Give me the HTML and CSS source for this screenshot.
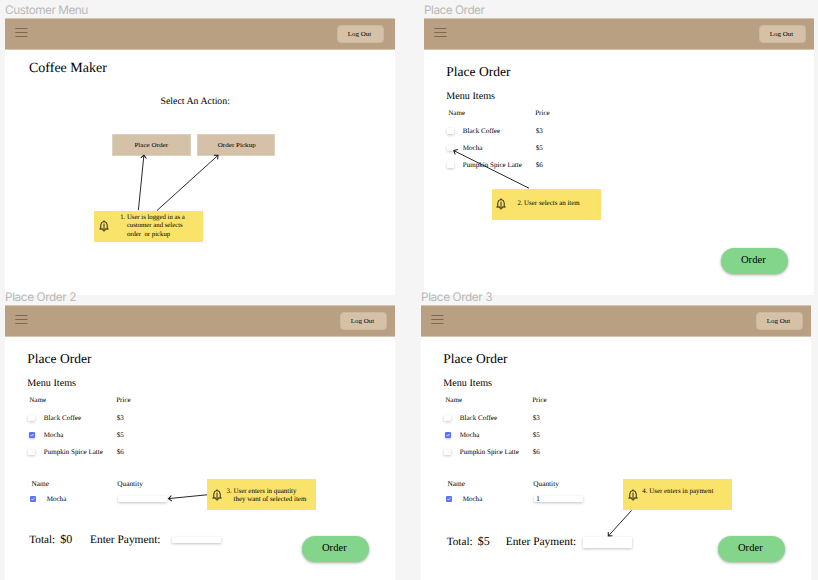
FILE: index.html
```html
<!DOCTYPE html>
<html lang="en">
<head>
<meta charset="utf-8">
<title>Coffee Maker storyboard</title>
<link rel="stylesheet" href="styles.css">
</head>
<body>
<svg class="defs" width="0" height="0">
  <symbol id="bell" viewBox="0 0 10 12"><path d="M.7 9h8.6M1.8 8.8V5a3.2 3.4 0 0 1 6.4 0v3.8M5 1.6V.8M5 4v2.2M5 6.9v.7M3.7 9.4a1.3 1.7 0 0 0 2.6 0" fill="none" stroke="#2f2a12" stroke-width="1" stroke-linecap="round"/></symbol>
  <symbol id="menu" viewBox="0 0 13 10"><path d="M.3 .5h12.2M.3 4.5h12.2M.3 8.5h12.2" fill="none" stroke="#7c6851" stroke-width="1"/></symbol>
  <symbol id="check" viewBox="0 0 6 6"><path d="M1.5 3l1.1 1.1L4.5 1.9" fill="none" stroke="#fff" stroke-width=".8"/></symbol>
</svg>
<main class="canvas">

  <section class="frame frame-a">
    <h2 class="label">Customer Menu</h2>
    <header class="bar"><svg class="burger"><use href="#menu"/></svg><button class="logout">Log Out</button></header>
    <div class="home">
      <h1 class="title brand">Coffee Maker</h1>
      <p class="prompt">Select An Action:</p>
      <div class="actions"><button class="action">Place Order</button><button class="action second">Order Pickup</button></div>
    </div>
  </section>

  <section class="frame frame-b">
    <h2 class="label">Place Order</h2>
    <header class="bar"><svg class="burger"><use href="#menu"/></svg><button class="logout">Log Out</button></header>
    <div class="body">
      <h1 class="title">Place Order</h1>
      <h3 class="subtitle">Menu Items</h3>
      <div class="head"><span>Name</span><span>Price</span></div>
      <div class="item"><i class="box"></i><span>Black Coffee</span><span>$3</span></div>
      <div class="item"><i class="box"></i><span>Mocha</span><span>$5</span></div>
      <div class="item"><i class="box"></i><span>Pumpkin Spice Latte</span><span>$6</span></div>
      <button class="order solo">Order</button>
    </div>
  </section>

  <section class="frame frame-c">
    <h2 class="label">Place Order 2</h2>
    <header class="bar"><svg class="burger"><use href="#menu"/></svg><button class="logout">Log Out</button></header>
    <div class="body">
      <h1 class="title">Place Order</h1>
      <h3 class="subtitle">Menu Items</h3>
      <div class="head"><span>Name</span><span>Price</span></div>
      <div class="item"><i class="box"></i><span>Black Coffee</span><span>$3</span></div>
      <div class="item"><svg class="box on"><use href="#check"/></svg><span>Mocha</span><span>$5</span></div>
      <div class="item"><i class="box"></i><span>Pumpkin Spice Latte</span><span>$6</span></div>
      <div class="head chosen"><span>Name</span><span>Quantity</span></div>
      <div class="item pick"><svg class="box on"><use href="#check"/></svg><span>Mocha</span><span class="field"></span></div>
      <div class="pay"><span class="total">Total:</span><span class="sum">$0</span><span class="enter">Enter Payment:</span><span class="field"></span><button class="order">Order</button></div>
    </div>
  </section>

  <section class="frame frame-d">
    <h2 class="label">Place Order 3</h2>
    <header class="bar"><svg class="burger"><use href="#menu"/></svg><button class="logout">Log Out</button></header>
    <div class="body">
      <h1 class="title">Place Order</h1>
      <h3 class="subtitle">Menu Items</h3>
      <div class="head"><span>Name</span><span>Price</span></div>
      <div class="item"><i class="box"></i><span>Black Coffee</span><span>$3</span></div>
      <div class="item"><svg class="box on"><use href="#check"/></svg><span>Mocha</span><span>$5</span></div>
      <div class="item"><i class="box"></i><span>Pumpkin Spice Latte</span><span>$6</span></div>
      <div class="head chosen"><span>Name</span><span>Quantity</span></div>
      <div class="item pick"><svg class="box on"><use href="#check"/></svg><span>Mocha</span><span class="field">1</span></div>
      <div class="pay low"><span class="total">Total:</span><span class="sum">$5</span><span class="enter">Enter Payment:</span><span class="field tall"></span><button class="order">Order</button></div>
    </div>
  </section>

  <aside class="note note-1"><svg class="bell"><use href="#bell"/></svg><span class="num">1.</span><p>User is logged in as a<br>customer and selects<br>order&nbsp; or pickup</p></aside>
  <aside class="note note-2"><svg class="bell"><use href="#bell"/></svg><span class="num">2.</span><p>User selects an item</p></aside>
  <aside class="note note-3"><svg class="bell"><use href="#bell"/></svg><span class="num">3.</span><p>User enters in quantity<br>they want of selected item</p></aside>
  <aside class="note note-4"><svg class="bell"><use href="#bell"/></svg><span class="num">4.</span><p>User enters in payment</p></aside>

  <svg class="arrows" viewBox="0 0 818 580">
    <defs><marker id="tip" markerUnits="userSpaceOnUse" markerWidth="8" markerHeight="8" refX="5" refY="4" orient="auto"><path d="M2 1.2L5 4L2 6.8" fill="none" stroke="#111" stroke-width="1"/></marker></defs>
    <path d="M138.4 210.2L143.9 155.2"/>
    <path d="M157 210.5L218 155.3"/>
    <path d="M529 188.2L453.8 150.6"/>
    <path d="M207 494.8L168.6 498.6"/>
    <path d="M631.5 510.5L608.3 536"/>
  </svg>
</main>
</body>
</html>
```
FILE: styles.css
```css
* { box-sizing: border-box; margin: 0; padding: 0; }
body { background: #f5f5f5; overflow: hidden; }
button { border: 0; font: inherit; color: inherit; }
.defs { position: absolute; }

.canvas {
  position: relative;
  width: 818px;
  height: 580px;
  overflow: hidden;
  font: 7.05px/10px "Liberation Serif", serif;
  color: #000;
  text-rendering: geometricPrecision;
}

/* Frames on the canvas */
.frame { position: absolute; width: 390px; height: 277px; background: #fff; }
.frame-a { left: 5px; top: 18px; }
.frame-b { left: 424px; top: 18px; }
.frame-c { left: 5px; top: 305px; }
.frame-d { left: 421px; top: 305px; }
.label {
  position: absolute;
  left: 0;
  top: -16px;
  font: 400 11.8px/16px Inter, sans-serif;
  letter-spacing: -.48px;
  color: #b9b9b9;
  white-space: nowrap;
}
.frame-c .label, .frame-d .label { letter-spacing: -.4px; }

/* Top bar */
.bar {
  display: flex;
  justify-content: space-between;
  align-items: flex-start;
  height: 32px;
  padding: 7px 8px 0 10px;
  background: #b9a083;
  border: 1px solid #d6c5ad;
  border-width: 1px 0;
}
.burger { width: 13px; height: 10px; margin-top: 2px; }
.logout {
  width: 47px;
  height: 18px;
  margin-top: -1px;
  border: 1px solid #cdb89b;
  border-radius: 4px;
  background: #d5c0a8;
  font-size: 7px;
  line-height: 16px;
  padding-right: 2px;
}
.frame-a .bar { padding-right: 11px; }

/* Customer menu */
.home { padding-top: 10px; }
.title { font-size: 13.5px; line-height: 18px; font-weight: 400; }
.brand { font-size: 14px; padding-left: 24px; }
.prompt { margin-top: 16px; padding-left: 155.5px; font-size: 9.85px; line-height: 16px; }
.actions { display: flex; gap: 6px; padding-left: 107px; margin-top: 24px; }
.action {
  width: 78.5px;
  height: 22px;
  background: #d5c0a8;
  border: 1px solid #dfd0be;
  font-size: 7.1px;
}
.action.second { padding-left: 2px; }

/* Order screens */
.body { display: flex; flex-direction: column; padding: 13px 0 0 22.3px; }
.subtitle { margin-top: 9px; font-size: 10.15px; line-height: 14px; font-weight: 400; }
.head { display: grid; grid-template-columns: 87px 1fr; padding-left: 1.9px; margin: 3.8px 0 4.2px; }
.item { display: grid; grid-template-columns: 15.5px 73px 1fr; padding-left: 1px; height: 17.33px; align-items: center; }
.box {
  width: 7px;
  height: 6px;
  border-radius: 1px;
  background: #fff;
  box-shadow: 0 1px 3px rgba(0, 0, 0, .24);
}
.box.on { width: 6px; background: #5b73f5; box-shadow: 0 1px 2px rgba(60, 80, 220, .35); margin-left: .5px; }
.chosen { grid-template-columns: 85.7px 1fr; margin: 18.2px 0 0; padding-left: 4.3px; font-size: 7.3px; }
.pick { grid-template-columns: 16.4px 71px 49px; padding-left: 3px; height: 16px; margin-top: 2px; }
.pick .box { box-shadow: none; margin: -1px 0 0; }
.field {
  width: 49px;
  height: 6px;
  padding-left: 2.5px;
  border-radius: 1px;
  background: #fff;
  box-shadow: 0 1px 3px rgba(0, 0, 0, .24);
  line-height: 6px;
}
.field.tall { height: 11px; margin-top: 6px; }

.pay { display: flex; align-items: flex-start; margin-top: 25px; padding: 0 25.7px 0 2px; font-size: 11.4px; line-height: 16px; }
.pay .field { margin-top: 5px; }
.pay .total { width: 31px; font-size: 11.2px; }
.pay .sum { width: 29.7px; font-size: 12px; line-height: 15px; }
.pay .enter { width: 82.5px; }
.pay.low { padding-left: 3.4px; }
.pay.low > span { position: relative; top: 2px; }
.pay.low .sum { width: 28px; }
.pay.low .enter { width: 77.5px; }
.pay.low .field { top: 0; }

.order {
  width: 67px;
  height: 26px;
  margin: 4px 0 0 auto;
  padding: 0 3px 2px 0;
  border-radius: 13px;
  background: #82d58b;
  box-shadow: 0 1px 3px rgba(0, 0, 0, .35);
  font-size: 10.6px;
  line-height: 14px;
}
.order.solo { margin: 74.4px 25.7px 0 auto; }

/* Annotations lying over the frames */
.note {
  position: absolute;
  display: flex;
  width: 109px;
  height: 31px;
  background: #fae36b;
  font-size: 6.95px;
  line-height: 8.67px;
}
.note p { white-space: nowrap; }
.bell { width: 10px; height: 12px; margin: 9.5px 0 0 4.5px; flex: none; }
.num { width: 6.7px; flex: none; }
.note-1 { left: 94.4px; top: 210.5px; font-size: 6.75px; }
.note-1 .num { margin-left: 11.3px; }
.note-1 .num, .note-1 p { padding-top: 3px; }
.note-2 { left: 491.6px; top: 188.5px; }
.note-2 .num { margin-left: 11.3px; }
.note-2 .num, .note-2 p { padding-top: 10.9px; }
.note-3 { left: 207px; top: 479.4px; }
.note-3 .num { margin-left: 5px; width: 7px; }
.note-4 { left: 623px; top: 479.4px; }
.note-4 .num { margin-left: 4.7px; width: 7px; }
.note-3 .num, .note-3 p, .note-4 .num, .note-4 p { padding-top: 7.3px; }

.arrows { position: absolute; left: 0; top: 0; width: 818px; height: 580px; }
.arrows > path { fill: none; stroke: #111; stroke-width: .9; marker-end: url(#tip); }
```
